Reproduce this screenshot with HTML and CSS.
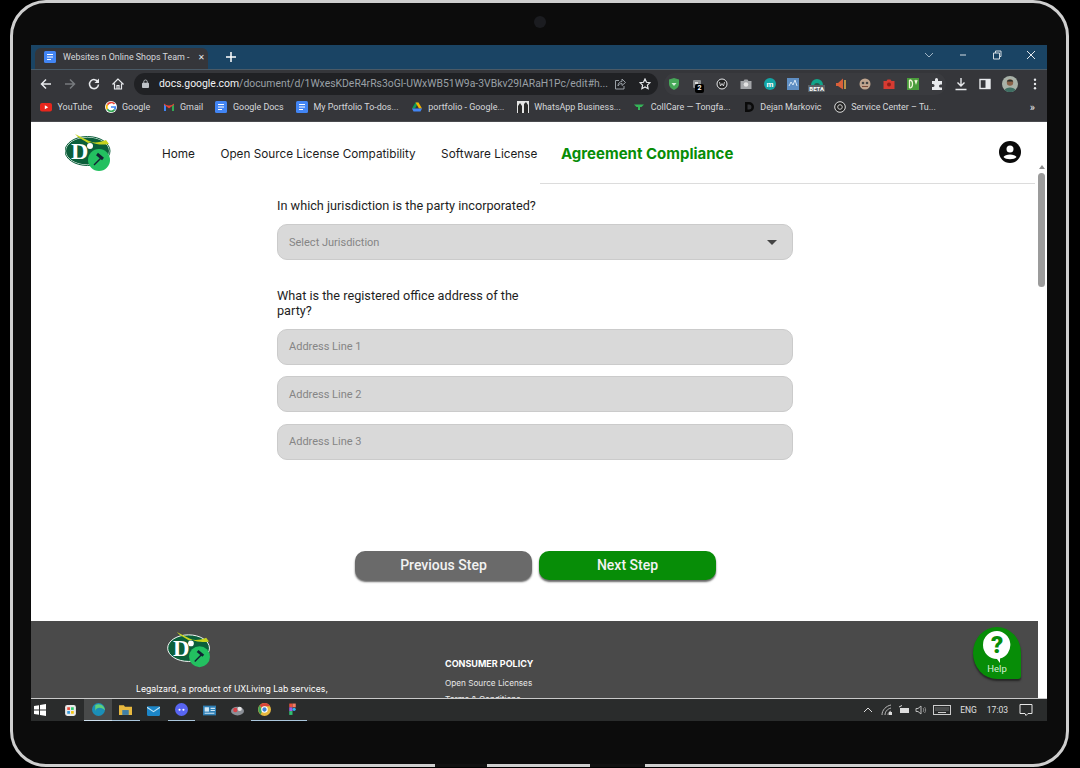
FILE: index.html
```html
<!DOCTYPE html>
<html lang="en">
<head>
    <meta charset="UTF-8">
    <title>Agreement Compliance</title>
    <link rel="stylesheet" href="styles.css">
</head>
<body>
    <svg class="defs" width="0" height="0">
        <symbol id="docIcon" viewBox="0 0 12 12">
            <rect width="12" height="12" rx="1.5" fill="#4285f4"/>
            <path d="M3 3.5h6M3 6h6M3 8.5h4" stroke="#fff" stroke-width="1.1"/>
        </symbol>
    </svg>

    <div class="device">
        <div class="camera"></div>
        <div class="screen">

            <div class="tabStrip">
                <div class="tab">
                    <svg class="tabIcon"><use href="#docIcon"/></svg>
                    <span class="tabTitle">Websites n Online Shops Team -</span>
                    <span class="tabClose">✕</span>
                </div>
                <svg class="newTab" viewBox="0 0 10 10"><path d="M5 0v10M0 5h10" stroke="#fff" stroke-width="1.5"/></svg>
                <div class="winControls">
                    <svg viewBox="0 0 10 10"><path d="M1 3l4 4 4-4" fill="none" stroke="#9fb4c4" stroke-width="1"/></svg>
                    <svg viewBox="0 0 10 10"><path d="M2 5h6" stroke="#d5dde3" stroke-width="1"/></svg>
                    <svg viewBox="0 0 10 10"><path d="M1.5 3h6v6h-6zM3.5 3V1h5.5v5.500H7.500" fill="none" stroke="#d5dde3" stroke-width="1"/></svg>
                    <svg viewBox="0 0 10 10"><path d="M1 1l8 8M9 1l-8 8" stroke="#e4e9ed" stroke-width="1"/></svg>
                </div>
            </div>

            <div class="toolbar">
                <div class="navButtons">
                    <svg viewBox="0 0 12 12"><path d="M11 6H2M6 1.500L1.500 6 6 10.500" fill="none" stroke="#e8eaed" stroke-width="1.500"/></svg>
                    <svg viewBox="0 0 12 12"><path d="M1 6h9M6 1.500L10.500 6 6 10.500" fill="none" stroke="#777a7e" stroke-width="1.500"/></svg>
                    <svg viewBox="0 0 12 12"><path d="M10 4a4.500 4.500 0 1 0 .5 2.500" fill="none" stroke="#e8eaed" stroke-width="1.500"/><path d="M11 0.500v4.500H6.500z" fill="#e8eaed"/></svg>
                    <svg viewBox="0 0 12 12"><path d="M6 1L.8 6H2.500v5h7V6h1.700zM5 11V7.500h2V11" fill="none" stroke="#e8eaed" stroke-width="1.200"/></svg>
                </div>
                <div class="urlPill">
                    <svg class="lock" viewBox="0 0 8 10"><path d="M2 4.500V3a2 2 0 0 1 4 0v1.500" fill="none" stroke="#bdc1c6"/><rect y="4" width="8" height="6" rx="1" fill="#bdc1c6"/></svg>
                    <span class="url"><b>docs.google.com</b>/document/d/1WxesKDeR4rRs3oGl-UWxWB51W9a-3VBkv29IARaH1Pc/edit#h...</span>
                    <svg class="urlIcon" viewBox="0 0 12 12"><path d="M5 2.500H1.500v8.500h8.500V8M4 8c0-3 2-4.500 4-4.500V1l3.500 3.500L8 7.500V5.500C6 5.500 5 6.500 4 8z" fill="none" stroke="#9aa0a6"/></svg>
                    <svg class="urlIcon" viewBox="0 0 12 12"><path d="M6 1l1.500 3.300 3.500.4-2.600 2.400.7 3.600L6 9l-3.100 1.700.7-3.600L1 4.700l3.500-.4z" fill="none" stroke="#e8eaed" stroke-width="1.200"/></svg>
                </div>
                <div class="extensions">
                    <svg viewBox="0 0 14 14"><path d="M7 1l5 1.500V7c0 3-2.500 5-5 6-2.500-1-5-3-5-6V2.500z" fill="#46a758"/><path d="M4.500 6l2.500 3 2.500-3z" fill="#d7f0dc"/></svg>
                    <span class="extBadged">
                        <svg viewBox="0 0 14 14"><rect x="2" y="2" width="8" height="8" rx="1" fill="#8b8d90"/><rect x="4" y="4" width="3" height="2" fill="#dcdcdc"/></svg>
                        <b class="badge">2</b>
                    </span>
                    <svg viewBox="0 0 14 14"><circle cx="7" cy="7" r="5" fill="#222" stroke="#e8eaed"/><path d="M4.500 5l1 4L7 6.500 8.500 9l1-4" fill="none" stroke="#e8eaed" stroke-width=".8"/></svg>
                    <svg viewBox="0 0 14 14"><path d="M1.500 4h3l1-1.500h3l1 1.500h3v8h-11z" fill="#a4a6a9"/><circle cx="7" cy="7.500" r="2.300" fill="#e4e4e4"/></svg>
                    <svg viewBox="0 0 14 14"><circle cx="7" cy="7" r="6" fill="#12a5a5"/><text x="7" y="9.500" class="extLetter">m</text></svg>
                    <svg viewBox="0 0 14 14"><rect x="1" y="1" width="12" height="12" fill="#5f8fc4"/><path d="M3 9l2-4 2 3 2-5 2 6" fill="none" stroke="#d6e6f5"/></svg>
                    <span class="extBadged">
                        <svg viewBox="0 0 14 14"><circle cx="7" cy="7" r="6" fill="#12a58a"/><circle cx="7" cy="8" r="3" fill="#2c5a50"/></svg>
                        <b class="betaTag">BETA</b>
                    </span>
                    <svg viewBox="0 0 14 14"><path d="M9 1.500L4 6H2v3h2l5 3.500z" fill="#d9603a"/><path d="M11 3v9" stroke="#e8b24a" stroke-width="1.500"/></svg>
                    <svg viewBox="0 0 14 14"><circle cx="7" cy="7" r="5.500" fill="#c0a58f"/><circle cx="5" cy="6" r="1.300" fill="#444"/><circle cx="9" cy="6" r="1.300" fill="#444"/><path d="M4 9.500h6" stroke="#7b4a38"/></svg>
                    <svg viewBox="0 0 14 14"><path d="M1.500 4h3l1-1.500h3l1 1.500h3v8h-11z" fill="#d63b32"/><circle cx="7" cy="7.500" r="2" fill="#8f1d17"/></svg>
                    <svg viewBox="0 0 14 14"><rect x="1" y="1" width="12" height="12" fill="#4a9c3b"/><path d="M3.500 3v8M3.500 3c4 0 4 8 0 8M9 3l1 3 1-3" fill="none" stroke="#f1f5d8" stroke-width="1.300"/></svg>
                    <svg viewBox="0 0 14 14"><path d="M5 2.500a1.500 1.500 0 0 1 3 0V4h4v3.500h-1.500a1.500 1.500 0 0 0 0 3H12V13H2v-3h1a1.500 1.500 0 0 0 0-3H2V4h3z" fill="#e8eaed"/></svg>
                </div>
                <div class="toolButtons">
                    <svg viewBox="0 0 14 14"><path d="M7 1v8M3.500 5.500L7 9l3.500-3.500M1.500 12.500h11" fill="none" stroke="#e8eaed" stroke-width="1.400"/></svg>
                    <svg viewBox="0 0 14 14"><rect x="2" y="2.500" width="10" height="9" fill="none" stroke="#e8eaed" stroke-width="1.400"/><rect x="7.500" y="2.500" width="4.500" height="9" fill="#e8eaed"/></svg>
                    <svg class="avatar" viewBox="0 0 16 16"><circle cx="8" cy="8" r="8" fill="#a9b2a8"/><circle cx="8" cy="6.500" r="3.200" fill="#8a6249"/><path d="M4.800 5.500c.5-2.500 5.900-2.500 6.400 0z" fill="#27302c"/><path d="M2.500 14c1-3.500 10-3.500 11 0a8 8 0 0 1-11 0z" fill="#3f6f63"/></svg>
                    <svg viewBox="0 0 14 14"><circle cx="7" cy="2.800" r="1.200" fill="#e8eaed"/><circle cx="7" cy="7" r="1.200" fill="#e8eaed"/><circle cx="7" cy="11.200" r="1.200" fill="#e8eaed"/></svg>
                </div>
            </div>

            <div class="bookmarks">
                <a class="bookmark"><svg viewBox="0 0 12 12"><rect y="2" width="12" height="8.500" rx="2" fill="#e8261c"/><path d="M4.800 4.200v4l3.400-2z" fill="#fff"/></svg>YouTube</a>
                <a class="bookmark"><svg viewBox="0 0 12 12"><circle cx="6" cy="6" r="6" fill="#fff"/><path d="M9.500 3A4.400 4.400 0 0 0 2.400 3.700" fill="none" stroke="#ea4335" stroke-width="1.700"/><path d="M2.400 3.700a4.400 4.400 0 0 0 0 4.600" fill="none" stroke="#fbbc05" stroke-width="1.700"/><path d="M2.400 8.300A4.400 4.400 0 0 0 9.700 8.500" fill="none" stroke="#34a853" stroke-width="1.700"/><path d="M6 6h4.300a4.400 4.400 0 0 1-.6 2.500" fill="none" stroke="#4285f4" stroke-width="1.700"/></svg>Google</a>
                <a class="bookmark"><svg viewBox="0 0 12 12"><path d="M1 10V3l2 1.500V10z" fill="#4285f4"/><path d="M9 10V4.500L11 3v7z" fill="#34a853"/><path d="M1 3l5 4 5-4-2 1.500L6 5 3 4.500z" fill="#ea4335" stroke="#ea4335" stroke-width=".8"/></svg>Gmail</a>
                <a class="bookmark"><svg><use href="#docIcon"/></svg>Google Docs</a>
                <a class="bookmark"><svg><use href="#docIcon"/></svg>My Portfolio To-dos...</a>
                <a class="bookmark"><svg viewBox="0 0 12 12"><path d="M4.500 1.500h3L4 7.500H1z" fill="#0f9d58"/><path d="M7.500 1.500L11 7.500H8L4.500 1.500z" fill="#f4b400"/><path d="M1 7.500h10L9.500 10.500H2.500z" fill="#4285f4"/></svg>portfolio - Google...</a>
                <a class="bookmark"><svg viewBox="0 0 12 12"><rect width="12" height="12" fill="#e4e4e4"/><path d="M1 12V5l2-3 2 3v7zM7 12V3l2-2 2 3v8z" fill="#2b2b2b"/></svg>WhatsApp Business...</a>
                <a class="bookmark"><svg viewBox="0 0 12 12"><path d="M1 3.500h10L8.500 6H3.500z" fill="#35b558"/><path d="M5 6h2v3H5z" fill="#35b558"/></svg>CollCare — Tongfa...</a>
                <a class="bookmark"><svg viewBox="0 0 12 12"><path d="M2 1h4a5 5 0 0 1 0 10H2zM4.500 3.500v5H6a2.500 2.500 0 0 0 0-5z" fill="#0a0a0a" fill-rule="evenodd"/></svg>Dejan Markovic</a>
                <a class="bookmark"><svg viewBox="0 0 12 12"><circle cx="6" cy="6" r="5.300" fill="#222" stroke="#ddd"/><circle cx="6" cy="6" r="2.300" fill="none" stroke="#ccc"/></svg>Service Center – Tu...</a>
                <span class="moreBookmarks">»</span>
            </div>

            <div class="page">
                <div class="pageMain">
                    <header class="siteNav">
                        <svg class="navLogo" viewBox="0 0 48 40">
                            <ellipse cx="22.500" cy="17" rx="22" ry="14" fill="#0b5f3a" stroke="#fff"/>
                            <ellipse cx="22.500" cy="17" rx="22.500" ry="14.500" fill="none" stroke="#0b5f3a"/>
                            <path d="M10 0l14 7 3 1-4 1L13 3zM26 8c5 1 10 0 15-2l3 4c-6 1-12 1-18-2z" fill="#c6d31e"/>
                            <text x="6" y="25" class="logoLetter">D</text>
                            <circle cx="25" cy="12" r="3" fill="#fff"/>
                            <circle cx="34" cy="26" r="11" fill="#23c060"/>
                            <path d="M29 31l7-7" stroke="#123" stroke-width="1.500"/>
                            <path d="M32 20l6 5" stroke="#123" stroke-width="3"/>
                        </svg>
                        <nav class="navLinks">
                            <a>Home</a>
                            <a>Open Source License Compatibility</a>
                            <a>Software License</a>
                        </nav>
                        <div class="navRight">
                            <a class="navActive">Agreement Compliance</a>
                            <svg class="userIcon" viewBox="0 0 22 22">
                                <circle cx="11" cy="11" r="11" fill="#0a0a0a"/>
                                <circle cx="11" cy="8" r="3.500" fill="#fff"/>
                                <path d="M4.500 16c1.500-3.500 11.500-3.500 13 0-2 3-11 3-13 0z" fill="#fff"/>
                            </svg>
                        </div>
                    </header>

                    <form class="stepForm">
                        <label class="question">In which jurisdiction is the party incorporated?</label>
                        <div class="field selectField">
                            <span>Select Jurisdiction</span>
                            <i class="caret"></i>
                        </div>
                        <label class="question questionWide">What is the registered office address of the party?</label>
                        <div class="field"><span>Address Line 1</span></div>
                        <div class="field"><span>Address Line 2</span></div>
                        <div class="field"><span>Address Line 3</span></div>
                    </form>

                    <div class="stepButtons">
                        <button type="button" class="prevBtn">Previous Step</button>
                        <button type="button" class="nextBtn">Next Step</button>
                    </div>

                    <footer class="siteFooter">
                        <div class="footerBrand">
                            <svg class="footerLogo" viewBox="0 0 48 40">
                                <ellipse cx="22.500" cy="17" rx="22" ry="14" fill="#0b5f3a" stroke="#fff"/>
                                <path d="M10 0l14 7 3 1-4 1L13 3zM26 8c5 1 10 0 15-2l3 4c-6 1-12 1-18-2z" fill="#c6d31e"/>
                                <text x="6" y="25" class="logoLetter">D</text>
                                <circle cx="25" cy="12" r="3" fill="#fff"/>
                                <circle cx="34" cy="26" r="11" fill="#23c060"/>
                                <path d="M29 31l7-7" stroke="#123" stroke-width="1.500"/>
                                <path d="M32 20l6 5" stroke="#123" stroke-width="3"/>
                            </svg>
                            <p>Legalzard, a product of UXLiving Lab services,</p>
                        </div>
                        <div class="footerLinks">
                            <h4>CONSUMER POLICY</h4>
                            <a>Open Source Licenses</a>
                            <a>Terms &amp; Conditions</a>
                        </div>
                    </footer>
                </div>

                <div class="scrollbar">
                    <i class="scrollUp"></i>
                    <i class="scrollThumb"></i>
                </div>

                <div class="helpBtn">
                    <svg viewBox="0 0 28 32">
                        <path d="M14 0a14 14 0 1 0 0 28l3 4v-4.500A14 14 0 0 0 14 0z" fill="#fff"/>
                        <text x="14" y="22" class="helpMark">?</text>
                    </svg>
                    <span>Help</span>
                </div>
            </div>

            <div class="taskbar">
                <svg class="startIcon" viewBox="0 0 12 12"><path d="M0 2l5-.7v4.300H0zM6 1.100L12 0v5.600H6zM0 6.500h5v4.300L0 10zM6 6.500h6V12l-6-1z" fill="#fff"/></svg>
                <div class="taskApps">
                    <span class="taskApp"><svg viewBox="0 0 12 12"><rect x="1" y="1" width="10" height="10" rx="2" fill="#e9e9e9"/><rect x="3" y="3" width="2.500" height="2.500" fill="#e74c3c"/><rect x="6.500" y="3" width="2.500" height="2.500" fill="#2ecc71"/><rect x="3" y="6.500" width="2.500" height="2.500" fill="#3498db"/><rect x="6.500" y="6.500" width="2.500" height="2.500" fill="#f1c40f"/></svg></span>
                    <span class="taskApp taskActive"><svg viewBox="0 0 12 12"><circle cx="6" cy="6" r="6" fill="#1b8fb8"/><path d="M3 8c0-4 6-5 9-1a6 6 0 0 0-9-5z" fill="#5fd07a"/></svg></span>
                    <span class="taskApp taskOpen"><svg viewBox="0 0 12 12"><path d="M0 2h4.500l1 1.500H12V11H0z" fill="#e8b93f"/><rect x="3" y="6.500" width="6" height="4.500" fill="#3f7fa8"/></svg></span>
                    <span class="taskApp"><svg viewBox="0 0 12 12"><rect y="2" width="12" height="9" rx="1" fill="#1c86c8"/><path d="M0 3l6 4 6-4" fill="none" stroke="#bfe3f6"/></svg></span>
                    <span class="taskApp taskOpen"><svg viewBox="0 0 12 12"><circle cx="6" cy="6" r="6" fill="#5865f2"/><circle cx="4.200" cy="6.200" r="1" fill="#fff"/><circle cx="7.800" cy="6.200" r="1" fill="#fff"/></svg></span>
                    <span class="taskApp"><svg viewBox="0 0 12 12"><rect y="1.500" width="12" height="9" fill="#2f7fb5"/><rect x="1.500" y="3" width="4" height="4" fill="#cfe6f5"/><path d="M7 4h4M7 6h4M1.500 8.500h9" stroke="#cfe6f5"/></svg></span>
                    <span class="taskApp"><svg viewBox="0 0 12 12"><ellipse cx="6" cy="6.500" rx="6" ry="4" fill="#8b8f96"/><circle cx="4" cy="5.500" r="2" fill="#d8434a"/><circle cx="8" cy="4.500" r="2" fill="#e6e6e6"/></svg></span>
                    <span class="taskApp taskOpen"><svg viewBox="0 0 12 12"><circle cx="6" cy="6" r="6" fill="#e8b93f"/><path d="M6 0a6 6 0 0 1 5.200 3H6a3 3 0 0 0-2.600 1.500L1.600 2A6 6 0 0 1 6 0z" fill="#d8433a"/><path d="M1.600 2L4 7l-1.500 3.500A6 6 0 0 1 1.600 2z" fill="#3da35a"/><circle cx="6" cy="6" r="2.500" fill="#3f7fd8" stroke="#fff"/></svg></span>
                    <span class="taskApp taskOpen"><svg viewBox="0 0 12 12"><rect x="3" y="0.500" width="3" height="3.500" fill="#e8503a"/><rect x="6" y="0.500" width="3" height="3.500" fill="#f37a62"/><rect x="3" y="4" width="3" height="3.500" fill="#9b5de5"/><circle cx="7.500" cy="5.800" r="1.500" fill="#2cb6f0"/><rect x="3" y="7.500" width="3" height="3.500" fill="#2fbf71"/></svg></span>
                </div>
                <div class="tray">
                    <svg class="trayChevron" viewBox="0 0 12 12"><path d="M2 8l4-4 4 4" fill="none" stroke="#ddd"/></svg>
                    <svg viewBox="0 0 12 12"><path d="M1 11C1 6 5 2 10 1M4 11c0-3 2-6 6-7M7 11c0-2 1-3 3-4" fill="none" stroke="#bbb"/><rect x="8" y="8" width="3" height="3" fill="#ddd"/></svg>
                    <svg viewBox="0 0 12 12"><rect x="2" y="4" width="9" height="5" fill="#ddd"/><path d="M1 3l3-1.500" stroke="#ddd"/></svg>
                    <svg viewBox="0 0 12 12"><path d="M1 4.500h2L6 2v8L3 7.500H1z" fill="none" stroke="#bbb"/><path d="M8 4c1 1 1 3 0 4M9.500 3c1.500 1.500 1.500 4.500 0 6" fill="none" stroke="#888"/></svg>
                    <svg class="keyboard" viewBox="0 0 18 12"><rect x=".5" y="1.500" width="17" height="9" fill="none" stroke="#ccc"/><path d="M2.500 4h13M2.500 6h13" stroke="#aaa" stroke-dasharray="1 1"/><path d="M5 8.500h8" stroke="#ccc"/></svg>
                    <span class="trayText trayLang">ENG</span>
                    <span class="trayText trayTime">17:03</span>
                    <svg class="notify" viewBox="0 0 14 14"><path d="M1 1.500h12v9H9l-2 2-1-2H1z" fill="none" stroke="#e6e6e6"/></svg>
                </div>
            </div>
        </div>
        <i class="notch notchLeft"></i>
        <i class="notch notchRight"></i>
    </div>
</body>
</html>
```

FILE: styles.css
```css
body {
    margin: 0;
    background: #000;
    font-family: 'Roboto', sans-serif;
    overflow: hidden;
}

.defs {
    position: absolute;
}

.logoLetter {
    font-family: 'Liberation Serif', serif;
    font-weight: bold;
    font-size: 24px;
    fill: #fff;
}

.device {
    position: relative;
    box-sizing: border-box;
    width: 1059px;
    height: 767px;
    margin-left: 10px;
    padding: 42px 19px 0 18px;
    border: 3px solid #cfcfcf;
    border-radius: 36px;
    background: #0c0c0c;
}

.camera {
    position: absolute;
    top: 13px;
    left: 521px;
    width: 12px;
    height: 12px;
    border-radius: 50%;
    background: #1b1c20;
}

.notch {
    position: absolute;
    bottom: -3px;
    height: 3px;
    background: #111;
}

.notchLeft {
    left: 422px;
    width: 52px;
}

.notchRight {
    left: 577px;
    width: 55px;
}

.screen {
    width: 1016px;
    height: 676px;
    display: flex;
    flex-direction: column;
    overflow: hidden;
}

/* browser top */
.tabStrip {
    height: 24px;
    flex: none;
    display: flex;
    align-items: flex-end;
    padding-left: 4px;
    background: #1a4464;
}

.tab {
    box-sizing: border-box;
    width: 173px;
    height: 21px;
    display: flex;
    align-items: center;
    padding: 0 3px 3px 9px;
    background: #35363a;
    border-radius: 6px 6px 0 0;
}

.tabIcon {
    width: 12px;
    height: 12px;
    margin-right: 7px;
}

.tabTitle {
    flex: 1;
    font-size: 8.900px;
    color: #d6d8da;
    white-space: nowrap;
}

.tabClose {
    font-size: 8px;
    color: #e8eaed;
}

.newTab {
    width: 10px;
    height: 10px;
    margin: 0 0 7px 18px;
}

.winControls {
    margin-left: auto;
    display: flex;
    gap: 24px;
    padding: 0 11px 4px 0;
    box-sizing: border-box;
    height: 24px;
    align-items: center;
}

.winControls svg {
    width: 10px;
    height: 10px;
}

.toolbar {
    height: 28px;
    flex: none;
    display: flex;
    align-items: center;
    background: #35363a;
    border-top: 1px solid #4a5a66;
    box-sizing: border-box;
}

.navButtons {
    display: flex;
    gap: 12px;
    padding-left: 9px;
    width: 95px;
    box-sizing: border-box;
}

.navButtons svg {
    width: 12px;
    height: 12px;
}

.urlPill {
    box-sizing: border-box;
    width: 524px;
    height: 22px;
    flex: none;
    margin-left: 8px;
    display: flex;
    align-items: center;
    padding: 0 7px 0 8px;
    border-radius: 11px;
    background: #202124;
}

.lock {
    width: 7px;
    height: 9px;
    margin-right: 10px;
}

.url {
    flex: 1;
    min-width: 0;
    font-size: 10.400px;
    color: #9aa0a6;
    white-space: nowrap;
}

.url b {
    font-weight: 400;
    color: #f1f3f4;
}

.urlIcon {
    width: 12px;
    height: 12px;
    margin-left: 13px;
}

.extensions {
    box-sizing: border-box;
    width: 282px;
    height: 22px;
    flex: none;
    margin-left: 6px;
    display: flex;
    align-items: center;
    padding-left: 3px;
    background: #3a3b3f;
    border-radius: 11px;
}

.extensions > svg,
.extBadged {
    position: relative;
    width: 14px;
    height: 14px;
    margin-right: 9.900px;
    flex: none;
}

.extBadged svg {
    width: 14px;
    height: 14px;
}

.extLetter {
    font-size: 8px;
    font-weight: bold;
    fill: #fff;
    text-anchor: middle;
}

.badge {
    position: absolute;
    top: 7px;
    left: 4px;
    width: 9px;
    height: 9px;
    font-size: 7px;
    line-height: 9px;
    text-align: center;
    color: #fff;
    background: #000;
    border-radius: 2px;
}

.betaTag {
    position: absolute;
    top: 8px;
    left: -2px;
    padding: 0 1px;
    font-size: 6px;
    line-height: 7px;
    color: #fff;
    background: #5a6166;
}

.toolButtons {
    display: flex;
    align-items: center;
    gap: 10px;
    margin-left: 8px;
}

.toolButtons svg {
    width: 14px;
    height: 14px;
}

.toolButtons .avatar {
    width: 16px;
    height: 16px;
}

.bookmarks {
    box-sizing: border-box;
    height: 25px;
    flex: none;
    display: flex;
    align-items: center;
    gap: 12.300px;
    padding: 0 0 4px 9px;
    background: #35363a;
    border-bottom: 1px solid #4a4b4f;
}

.bookmark {
    display: flex;
    align-items: center;
    gap: 5.500px;
    font-size: 8.950px;
    color: #d6d8da;
    white-space: nowrap;
}

.bookmark svg {
    width: 12px;
    height: 12px;
}

.moreBookmarks {
    margin-left: auto;
    padding-right: 12px;
    font-size: 11px;
    color: #e8eaed;
}

/* page */
.page {
    position: relative;
    height: 576px;
    flex: none;
    display: flex;
    background: #fff;
    overflow: hidden;
}

.pageMain {
    width: 1007px;
    height: 576px;
    display: flex;
    flex-direction: column;
    overflow: hidden;
}

.siteNav {
    height: 62px;
    flex: none;
    display: flex;
    align-items: flex-start;
    font-family: 'Inter', sans-serif;
    font-size: 11.750px;
    color: #1b1b1b;
}

.navLogo {
    width: 48px;
    height: 40px;
    margin: 12px 0 0 34px;
    flex: none;
}

.navLinks {
    box-sizing: border-box;
    display: flex;
    gap: 25.500px;
    margin-left: 49px;
    width: 378px;
    flex: none;
    height: 62px;
    padding-top: 2px;
    align-items: center;
    white-space: nowrap;
}

.navRight {
    box-sizing: border-box;
    width: 495px;
    height: 62px;
    flex: none;
    display: flex;
    align-items: center;
    justify-content: space-between;
    padding: 2px 14px 0 21px;
    border-bottom: 1px solid #dcdcdc;
}

.navActive {
    font-size: 15px;
    font-weight: 700;
    color: #078d07;
}

.userIcon {
    width: 22px;
    height: 22px;
    margin-top: -3px;
}

.stepForm {
    box-sizing: border-box;
    width: 516px;
    height: 367px;
    flex: none;
    margin-left: 246px;
    padding-top: 14px;
    display: flex;
    flex-direction: column;
}

.question {
    font-size: 12.700px;
    line-height: 15px;
    color: #1e1e1e;
    margin-bottom: 11px;
}

.questionWide {
    width: 260px;
    margin-top: 16px;
    margin-bottom: 11px;
}

.field {
    box-sizing: border-box;
    height: 36px;
    flex: none;
    display: flex;
    align-items: center;
    justify-content: space-between;
    margin-bottom: 11.500px;
    padding: 0 15px 0 11px;
    background: #d9d9d9;
    border: 1px solid #cbcbcb;
    border-radius: 10px;
    font-size: 11px;
    color: #858585;
}

.caret {
    width: 0;
    height: 0;
    border-left: 5px solid transparent;
    border-right: 5px solid transparent;
    border-top: 5px solid #444;
}

.stepButtons {
    height: 70px;
    flex: none;
    display: flex;
    gap: 7px;
    padding-left: 324px;
}

.stepButtons button {
    width: 177px;
    height: 29px;
    padding: 0 0 2px;
    border: none;
    border-radius: 10px;
    font-family: 'Roboto', sans-serif;
    font-size: 14px;
    font-weight: 500;
    color: #f2f2f2;
    box-shadow: 0px 2px 2px rgba(0, 0, 0, 0.6);
}

.prevBtn {
    background: #6a6a6a;
}

.nextBtn {
    background: #078d07;
}

.siteFooter {
    flex: 1;
    display: flex;
    background: #4a4a4a;
    font-family: 'Inter', sans-serif;
    color: #fff;
}

.footerBrand {
    width: 316px;
    flex: none;
}

.footerLogo {
    display: block;
    width: 46px;
    height: 38px;
    margin: 11px 0 0 136px;
}

.footerBrand p {
    margin: 14px 0 0 105px;
    font-size: 8.700px;
    line-height: 11px;
    white-space: nowrap;
}

.footerLinks {
    margin-left: 98px;
    padding-top: 37px;
    display: flex;
    flex-direction: column;
    font-size: 8.200px;
}

.footerLinks h4 {
    margin: 0 0 9px;
    font-size: 9px;
    line-height: 11px;
    font-weight: 700;
}

.footerLinks a {
    line-height: 10px;
    margin-bottom: 6px;
    color: #e8e8e8;
}

.scrollbar {
    width: 9px;
    flex: none;
    position: relative;
}

.scrollUp {
    position: absolute;
    top: 43px;
    left: 1px;
    width: 0;
    height: 0;
    border-left: 3px solid transparent;
    border-right: 3px solid transparent;
    border-bottom: 4px solid #8c8c8c;
}

.scrollThumb {
    position: absolute;
    top: 51px;
    left: 0;
    width: 7px;
    height: 114px;
    border-radius: 4px;
    background: #9b9b9b;
}

.helpBtn {
    position: absolute;
    top: 505px;
    left: 942px;
    width: 48px;
    height: 52px;
    display: flex;
    flex-direction: column;
    align-items: center;
    background: #078d07;
    border-radius: 50% 50% 3px 50%;
    box-shadow: 0px 2px 2px rgba(0, 0, 0, 0.5);
    color: #d8f0d8;
    font-size: 9.500px;
    line-height: 11px;
}

.helpBtn svg {
    width: 28px;
    height: 32px;
    margin-top: 4px;
    flex: none;
}

.helpMark {
    font-size: 24px;
    font-weight: 900;
    fill: #078d07;
    text-anchor: middle;
}

/* windows taskbar */
.taskbar {
    box-sizing: border-box;
    height: 23px;
    flex: none;
    display: flex;
    align-items: center;
    background: #2a2c2c;
    border-top: 1px solid #c9c9c9;
}

.startIcon {
    width: 12px;
    height: 12px;
    margin: 0 0 0 3px;
}

.taskApps {
    display: flex;
    align-items: stretch;
    height: 22px;
    margin-left: 10.500px;
}

.taskApp {
    box-sizing: border-box;
    width: 27.800px;
    display: flex;
    align-items: center;
    justify-content: center;
}

.taskApp svg {
    width: 13px;
    height: 13px;
}

.taskActive {
    background: #484a4a;
    border-bottom: 1px solid #cfe0ee;
}

.taskOpen {
    border-bottom: 1px solid #aac6dc;
}

.tray {
    margin-left: auto;
    display: flex;
    align-items: center;
    gap: 5px;
    padding-right: 14px;
}

.tray svg {
    width: 12px;
    height: 12px;
}

.tray .trayChevron {
    margin-right: 2px;
}

.tray .keyboard {
    width: 18px;
    margin-left: 1px;
}

.tray .notify {
    width: 14px;
    height: 14px;
    margin-left: 6px;
}

.trayText {
    font-size: 8.500px;
    color: #e0e0e0;
}

.trayLang {
    margin-left: 4px;
}

.trayTime {
    margin-left: 5px;
}
```
